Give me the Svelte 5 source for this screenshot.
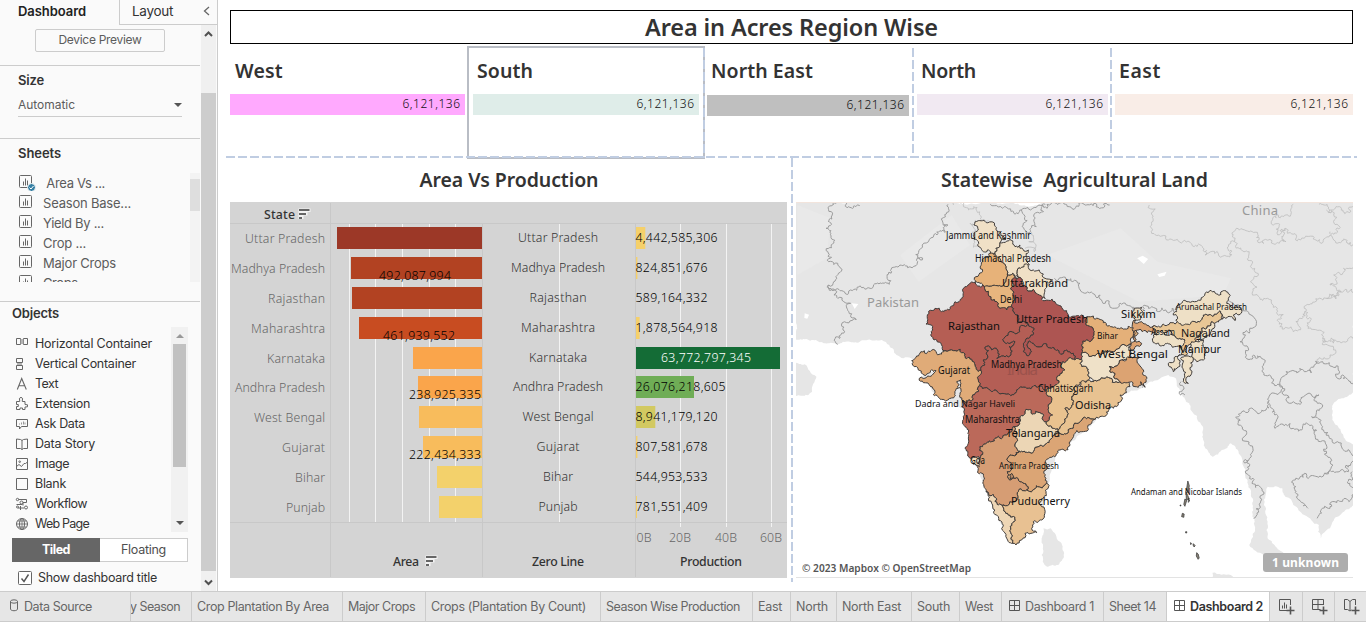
<script>
  // Adjusts tracking so a label fills the given width.
  function fit(node, width) {
    const r = document.createRange();
    r.selectNodeContents(node);
    const w = r.getBoundingClientRect().width;
    const n = node.textContent.length;
    if (n && w) node.style.letterSpacing = (width - w) / n + 'px';
  }

  const regions = [
    { name: 'West', tw: 48, color: '#ffa9fe' },
    { name: 'South', tw: 56, color: '#dfede9' },
    { name: 'North East', tw: 102, color: '#bfbfbf' },
    { name: 'North', tw: 55, color: '#f1e9f2' },
    { name: 'East', tw: 42, color: '#f9ede7' }
  ];

  const sheets = [['\u00a0Area Vs ...', 62], ['Season Base...', 88], ['Yield By ...', 61], ['Crop ...', 43], ['Major Crops', 73], ['Crops ...', 48]];
  const objects = [
    ['hc', 'Horizontal Container', 117], ['vc', 'Vertical Container', 101], ['tx', 'Text', 23],
    ['ex', 'Extension', 55], ['ask', 'Ask Data', 50], ['story', 'Data Story', 60],
    ['img', 'Image', 34], ['blank', 'Blank', 31], ['wf', 'Workflow', 52], ['web', 'Web Page', 54]
  ];

  const rows = [
    ['Uttar Pradesh', 227, 337, '#9c3827', '', 0, '4,442,585,306', 9.3, '#f5d06a', 80],
    ['Madhya Pradesh', 257, 351, '#b24222', '492,087,994', 379, '824,851,676', 1.4, '#f5d06a', 94],
    ['Rajasthan', 287, 352, '#b24222', '', 0, '589,164,332', 0, '#f5d06a', 57],
    ['Maharashtra', 317, 359, '#c84c21', '461,939,552', 383, '1,878,564,918', 3.6, '#f5d06a', 74],
    ['Karnataka', 347, 413, '#faa54b', '', 0, '63,772,797,345', 144, '#146c36', 58],
    ['Andhra Pradesh', 376, 418, '#faa54b', '238,925,335', 409, '26,076,218,605', 58, '#6fad56', 90],
    ['West Bengal', 406, 419, '#f8bc5c', '', 0, '8,941,179,120', 19.3, '#d2c961', 71],
    ['Gujarat', 436, 423, '#f8bc5c', '222,434,333', 409, '807,581,678', 1.4, '#f5d06a', 43],
    ['Bihar', 466, 437, '#f3d16b', '', 0, '544,953,533', 0, '#f5d06a', 30],
    ['Punjab', 496, 439, '#f3d16b', '', 0, '781,551,409', 1, '#f5d06a', 39]
  ];
  const numWidth = (s) => (s.length === 11 ? 72 : s.length === 13 ? 82 : 90);

  // Midpoint displacement keyed on the end points, so neighbours share one edge.
  function noise(a, b) {
    const s = Math.sin(a * 12.9898 + b * 78.233) * 43758.5453;
    return (s - Math.floor(s)) - 0.5;
  }
  function split(p, q, amp, min) {
    const d = Math.hypot(q[0] - p[0], q[1] - p[1]);
    if (d < min) return [q];
    const swap = p[0] > q[0] || (p[0] === q[0] && p[1] > q[1]);
    const [u, v] = swap ? [q, p] : [p, q];
    const k = noise(u[0] + v[1], u[1] + v[0]) * amp * Math.min(1, 30 / d);
    const m = [(u[0] + v[0]) / 2 - (v[1] - u[1]) * k, (u[1] + v[1]) / 2 + (v[0] - u[0]) * k];
    return [...split(p, m, amp, min), ...split(m, q, amp, min)];
  }
  function trace(str, closed = true, amp = 0.7, min = 7) {
    const pts = str.split(' ').map((s) => s.split(',').map(Number));
    const out = [pts[0]];
    for (let i = 1; i < pts.length; i++) out.push(...split(pts[i - 1], pts[i], amp, min));
    if (closed) out.push(...split(pts[pts.length - 1], pts[0], amp, min));
    return 'M' + out.map((p) => p[0].toFixed(1) + ' ' + p[1].toFixed(1)).join('L') + (closed ? 'Z' : '');
  }

  const west = [
    ['#f0e0c6', '222,75 235,62 268,66 290,92 318,118 300,128 288,145 285,160 262,150 250,155 235,125 222,105 235,90'],
    ['#f0e0c6', '285,160 288,145 300,128 320,123 345,140 360,135 385,150 388,195 365,202 352,210 355,232 338,220 322,222 318,200 303,185'],
    ['#e7b279', '280,160 303,185 318,200 322,222 318,245 295,258 262,258 240,250 225,248 228,230 245,218 248,185 262,172'],
    ['#e7b57e', '322,222 338,220 352,235 338,245 335,270 345,300 345,318 335,335 325,320 310,328 300,325 290,305 265,285 255,270 247,256 262,258 295,258 318,245'],
    ['#f0e0c6', '355,232 352,210 365,202 400,210 430,222 458,240 440,262 436,295 425,295 400,268 380,268 365,245'],
    ['#ad5552', '338,245 355,232 365,245 380,268 400,268 425,298 465,305 500,332 545,345 562,350 572,380 582,405 560,420 545,435 545,460 545,478 525,480 520,460 500,450 455,445 440,432 400,430 385,425 395,455 385,468 370,455 375,425 398,405 402,385 385,372 352,370 348,345 335,320 345,300 335,270'],
    ['#b55e54', '225,248 247,256 255,270 265,285 290,305 300,325 320,330 335,320 348,345 352,370 385,372 325,400 312,415 330,430 345,425 328,440 330,468 310,468 290,475 292,450 275,450 265,438 255,442 262,465 250,480 255,495 243,512 225,495 215,478 195,462 160,452 135,452 110,420 95,400 98,380 78,372 82,355 105,325 125,335 150,322 165,305 190,290 200,260 215,246'],
    ['#b45e55', '243,512 255,495 250,480 262,465 255,442 265,438 275,450 292,450 290,475 310,468 330,468 328,440 345,425 330,430 312,415 325,400 385,372 402,385 398,405 375,425 370,455 385,468 395,455 385,425 400,430 440,432 455,445 500,450 520,460 525,480 488,485 495,510 470,535 460,560 440,570 385,565 350,570 325,582 300,582 285,570 235,560 235,540'],
    ['#e0ab78', '35,482 50,468 110,460 135,452 160,452 195,462 215,478 225,495 243,512 235,540 235,560 235,575 218,585 218,600 200,610 190,602 183,570 182,540 170,545 175,565 165,580 125,598 100,584 70,548 58,535 80,532 108,512 85,520 55,510 38,495'],
    ['#bb695a', '235,560 285,570 300,582 325,582 350,570 385,565 440,570 455,602 445,620 458,645 440,665 428,650 420,638 378,628 360,655 345,680 320,705 285,715 240,740 240,775 215,775 205,730 195,680 185,620 190,602 200,610 218,600 218,585 235,575'],
    ['#d69d74', '240,740 285,715 320,705 345,680 348,765 330,765 335,800 322,815 325,835 345,835 360,845 380,870 352,878 350,900 310,915 285,905 258,875 250,840 232,800 225,785 240,775'],
    ['#f0dcbe', '215,775 240,775 238,800 228,795 218,785'],
    ['#eed6b5', '258,875 285,905 310,915 325,945 342,965 338,1030 325,1025 305,985 295,950 275,910'],
    ['#e8c192', '310,915 350,900 352,878 380,870 440,850 438,880 425,920 425,960 400,965 395,985 410,998 375,1000 365,1020 348,1035 338,1030 342,965 325,945'],
    ['#dba575', '348,765 400,755 440,730 480,700 505,695 530,670 545,660 590,652 575,670 545,695 510,725 505,740 480,750 460,768 440,778 438,810 440,850 380,870 360,845 345,835 325,835 322,815 335,800 330,765'],
    ['#ecd6b5', '378,628 420,638 428,650 440,665 460,685 480,700 440,730 400,755 348,765 345,680 360,655'],
    ['#e9c28f', '488,485 525,480 545,478 565,515 568,530 525,560 515,590 515,620 495,625 505,640 495,665 480,700 460,685 440,665 458,645 445,620 455,602 440,570 460,560 470,535 495,510'],
    ['#e8c291', '515,590 525,560 568,540 580,545 620,530 660,545 690,560 660,585 662,605 640,625 600,650 590,652 545,660 530,670 505,695 480,700 495,665 505,640 495,625 515,620'],
    ['#efe1c8', '545,478 545,460 590,462 640,455 675,435 693,432 692,455 665,480 628,500 645,520 660,545 620,530 580,545 568,530 565,515'],
    ['#e4b079', '562,350 580,348 610,368 640,382 700,385 715,400 693,432 675,435 640,455 590,462 545,460 545,435 560,420 582,405 572,380'],
    ['#dca372', '628,500 665,480 692,470 718,472 730,510 735,562 722,545 715,562 705,560 695,545 660,545 645,520'],
    ['#dca372', '693,432 705,410 725,430 708,438 692,450'],
    ['#dca372', '700,385 702,360 725,365 760,378 765,400 742,398 720,388 705,392 698,410'],
    ['#ecdcc0', '702,325 725,322 728,345 720,360 705,362 698,345'],
    ['#e9c796', '760,378 790,372 825,372 885,365 910,345 960,332 967,345 960,360 935,365 905,385 890,410 882,430 865,435 860,465 845,465 838,440 855,420 825,408 765,405'],
    ['#eee0c6', '760,405 825,408 855,420 850,435 810,432 760,428'],
    ['#eee0c6', '820,345 830,335 865,305 910,290 915,280 950,282 970,272 988,290 980,310 1010,320 1025,330 1000,345 1005,362 995,350 967,358 967,345 960,332 910,345 885,365 835,368 832,350'],
    ['#efe0c5', '905,385 935,365 942,385 930,405 910,418 890,430 885,415'],
    ['#efe0c5', '875,425 910,420 920,445 910,480 875,472 868,450'],
    ['#efe0c5', '842,475 858,468 880,480 875,520 865,550 850,545 850,510'],
    ['#efe0c5', '805,490 825,470 842,465 838,490 820,515 808,500'],
    ['#b98a66', '329,824 335,820 342,832 330,836']
  ].map(([c, s]) => [c, trace(s)]);

  const land = [
    '10,15 1540,15 1540,585 1480,625 1475,660 1500,710 1545,770 1540,925 1490,965 1470,1000 1445,1030 1440,990 1400,960 1370,930 1340,880 1300,875 1290,930 1300,1030 1340,1070 1370,1100 1380,1130 1320,1120 1290,1080 1250,1050 1265,980 1260,920 1240,850 1225,780 1200,745 1150,785 1130,760 1120,690 1090,640 1065,590 1050,550 1030,540 980,560 960,578 900,600 830,680 720,780 700,870 690,970 610,1045 570,980 510,810 470,640 410,610 350,550 390,530 330,490 290,480 270,450 250,435 130,448 10,432',
    '690,1000 710,1000 735,1040 745,1080 730,1110 700,1115 685,1080 685,1030',
    '10,505 40,508 72,545 60,590 10,605',
    '1150,1133 1200,1140 1210,1150 1150,1150'
  ].map((s) => trace(s, true, 0.35));

  const borders = [
    '118,28 115,60 98,100 105,200 135,215 105,270 165,285 270,268 275,235 320,218 360,195 360,150 400,120 430,90 430,28',
    '118,30 190,32', '105,270 130,310 165,325 160,350 180,375 140,390 130,448',
    '545,28 590,38 630,45 700,40 760,35 870,30', '630,45 635,85 655,110 690,50', '690,50 695,28',
    '720,250 740,248 790,285 850,320 935,345', '960,345 985,335 1040,340 1050,355',
    '1190,310 1255,360 1258,400 1225,440 1240,475 1270,490 1290,540 1340,575',
    '1340,575 1350,530 1400,530 1450,500 1490,550 1540,568',
    '1340,575 1300,625 1230,650 1220,690 1260,760 1235,800 1285,900 1262,970',
    '1340,575 1370,620 1440,600 1450,630 1420,665 1490,740 1530,800 1520,830 1455,835',
    '1300,620 1320,660 1320,700 1370,700 1420,690 1460,750 1470,800 1455,835 1400,835 1370,870 1390,920 1410,940',
    '1530,830 1530,900 1470,940 1435,970', '1065,560 1060,590 1075,600', '960,578 962,540'
  ].map((s) => trace(s, false, 0.9));
  const faint = [
    '445,30 500,35 540,75', '505,75 490,85 495,130 525,165', '655,110 650,140 670,150 665,170 640,160',
    '978,30 985,90 1030,135 1100,155 1130,180 1200,165 1210,140 1250,170 1265,220 1265,300',
    '1210,140 1215,100 1250,110 1290,145 1350,140 1350,100 1310,80 1350,60 1370,28',
    '1350,100 1390,135 1470,120 1540,155', '1440,28 1480,60 1470,110', '1460,45 1540,35',
    '1265,300 1300,310 1330,380 1370,410 1400,340 1460,310 1540,290', '1540,215 1480,240 1470,270 1500,290 1460,310',
    '1400,350 1410,400 1450,430 1540,430', '1450,430 1470,480 1440,500'
  ].map((s) => trace(s, false, 1));

  const labels = [
    ['Jammu and Kashmir', 946, 239, 85, 10], ['Himachal Pradesh', 975, 262, 76, 10], ['Uttarakhand', 1002, 287, 66, 11.5],
    ['Delhi', 1000, 303, 22, 10], ['Uttar Pradesh', 1016, 323, 72, 11.5], ['Rajasthan', 948, 330, 52, 11.5],
    ['Madhya Pradesh', 991, 368, 71, 10], ['Gujarat', 938, 374, 32, 10], ['Dadra and Nagar Haveli', 915, 407, 100, 9.5],
    ['Maharashtra', 965, 423, 55, 10], ['Goa', 970, 464, 15, 10], ['Telangana', 1006, 437, 54, 11.5],
    ['Chhattisgarh', 1038, 392, 55, 10], ['Odisha', 1075, 409, 36, 11.5], ['Andhra Pradesh', 999, 469, 60, 9],
    ['Puducherry', 1011, 505, 59, 11.5], ['Bihar', 1097, 339, 21, 9], ['West Bengal', 1097, 358, 71, 11.5],
    ['Sikkim', 1121, 318, 35, 11.5], ['Assam', 1151, 335, 24, 8], ['Nagaland', 1181, 337, 49, 11.5],
    ['Manipur', 1178, 353, 43, 11.5], ['Arunachal Pradesh', 1176, 310, 71, 8.5], ['Andaman and Nicobar Islands', 1131, 495, 111, 8.5]
  ];

  const tabs = [
    ['Crop Plantation By Area', 151, 132], ['Major Crops', 83, 67], ['Crops (Plantation By Count)', 175, 155],
    ['Season Wise Production', 152, 134], ['East', 38, 24], ['North', 46, 32], ['North East', 75, 59],
    ['South', 48, 33], ['West', 42, 28], ['Dashboard 1', 102, 69], ['Sheet 14', 63, 47], ['Dashboard 2', 103, 73]
  ];
</script>

{#snippet icon(k)}
  <svg class="ic" width="14" height="14" viewBox="0 0 14 14" fill="none" stroke="#666" stroke-width="1">
    {#if k === 'hc'}
      <path d="M1.5 1.5h4v6h-4zM8.5 1.5h4v6h-4z" /><path d="M5.5 2h3v5h-3z" fill="#b5b5b5" stroke="none" />
    {:else if k === 'vc'}
      <path d="M1.5 1.5h6v4h-6zM1.5 8.5h6v4h-6z" /><path d="M2 6h5v2H2z" fill="#b5b5b5" stroke="none" />
    {:else if k === 'tx'}
      <path d="M2.3 12.5L6.7 1.5 11.3 12.5M4 8.8h5.6" stroke-width="1.1" />
    {:else if k === 'ex'}
      <path d="M1.5 12.5v-3h1.8v-2H1.5v-3h3.2V3a1.6 1.6 0 1 1 2.6 0v1.5H10v3l2.5.3v2L10 10v2.5H7.5v-1.5H5v1.5z" />
    {:else if k === 'ask'}
      <path d="M1.5 2.5h11v7h-6L4.5 12V9.5h-3z" /><path d="M4.5 7.5v-1M6.5 7.5v-2M8.5 7.5v-3M10 7.5v-2" stroke="#999" />
    {:else if k === 'story'}
      <path d="M1.5 2l4 .5L7 3.5l1.5-1 4-.5v9.5h-4l-1.500 1-1.500-1h-4zM7 3.500v9" />
    {:else if k === 'img'}
      <path d="M1.500 1.500h11v11h-11zM1.500 9.500l2.500-2 2.500 2L9 6.500l1.500 0 2-1.500" /><circle cx="4.700" cy="4.700" r=".8" />
    {:else if k === 'blank'}
      <path d="M1.500 1.500h11v11h-11z" />
    {:else if k === 'wf'}
      <path d="M3.500 2.500h8v3H8M1.500 7.500h6M8 5.500v3M3 11h6M5.500 9v4" /><circle cx="2.500" cy="2.500" r="1.200" /><circle cx="6.500" cy="5.500" r="1.500" /><circle cx="11" cy="10.500" r="1.500" /><circle cx="2.500" cy="10" r="1" />
    {:else if k === 'web'}
      <circle cx="7" cy="7" r="5.500" /><ellipse cx="7" cy="7" rx="2.500" ry="5.500" /><path d="M7 1.500v11M1.500 7h11M2.500 4h9M2.500 10h9" stroke-width=".8" />
    {/if}
  </svg>
{/snippet}

{#snippet sort(x, y)}
  <g transform="translate({x} {y})">
    <path d="M-.5-.5h12v3.500h-3v3.500h-4v3.500h-5z" fill="#f3f3f3" />
    <path d="M0 0h10.500v2H0zM0 4h7v2H0zM0 8h3v2H0z" fill="#666" />
  </g>
{/snippet}

<div class="app">
  <div class="top">
    <aside>
      <div class="tabsrow">
        <div class="tab on"><span use:fit={68}>Dashboard</span></div>
        <div class="tab off"><span use:fit={41}>Layout</span>
          <svg width="8" height="10" viewBox="0 0 8 10"><path d="M6 1L1.500 5 6 9" fill="none" stroke="#666" stroke-width="1.300" /></svg>
        </div>
      </div>
      <div class="body">
        <div class="content">
          <section class="preview"><div class="btn"><span use:fit={83}>Device Preview</span></div></section>
          <section class="size">
            <h4><span use:fit={26}>Size</span></h4>
            <div class="select"><span use:fit={57}>Automatic</span><i class="down"></i></div>
          </section>
          <section class="sheets">
            <h4><span use:fit={43}>Sheets</span></h4>
            <div class="list">
              <div class="items">
                {#each sheets as [s, w], i}
                  <div class="sheet">
                    <svg width="17" height="17" viewBox="0 0 17 17" fill="none" stroke="#666">
                      <rect x=".5" y="1.500" width="12" height="12" rx="1" /><path d="M4.500 11.500v-4M6.500 11.500v-7M8.500 11.500v-5" />
                      {#if i === 0}<circle cx="12.500" cy="13.500" r="4" fill="#3680a4" stroke="#fafafa" /><path d="M10.500 13.500l1.500 1.500 2.500-3" stroke="#fff" />{/if}
                    </svg>
                    <span use:fit={w}>{s}</span>
                  </div>
                {/each}
              </div>
              <div class="sbar"><div></div></div>
            </div>
          </section>
          <section class="objects">
            <h4><span use:fit={47}>Objects</span></h4>
            <div class="olist">
              <div class="oitems">
                {#each objects as [k, s, w]}
                  <div class="obj">{@render icon(k)}<span use:fit={w}>{s}</span></div>
                {/each}
              </div>
              <div class="obar"><i class="up"></i><div class="thumb"></div><i class="down"></i></div>
            </div>
            <div class="toggle"><b><span use:fit={28}>Tiled</span></b><div><span use:fit={45}>Floating</span></div></div>
            <div class="check">
              <svg width="14" height="14" viewBox="0 0 14 14"><rect x=".5" y=".5" width="13" height="13" rx="1" fill="#fff" stroke="#666" /><path d="M3.500 7.500l2.500 3 4.500-7" fill="none" stroke="#555" stroke-width="1.400" /></svg>
              <span use:fit={119}>Show dashboard title</span>
            </div>
          </section>
        </div>
        <div class="vbar">
          <svg width="15" height="18" viewBox="0 0 15 18"><path d="M4 11l3.500-3.500L11 11" fill="none" stroke="#505050" stroke-width="2" /></svg>
          <div class="vthumb"></div>
          <svg width="15" height="20" viewBox="0 0 15 20"><path d="M4 9.500L7.500 13 11 9.500" fill="none" stroke="#505050" stroke-width="2" /></svg>
        </div>
      </div>
    </aside>

    <main>
      <div class="title"><span use:fit={293}>Area in Acres Region Wise</span></div>
      <div class="regions">
        {#each regions as r, i}
          <div class="region r{i}">
            <h2><span use:fit={r.tw}>{r.name}</span></h2>
            <div class="bar" style="background:{r.color}"><span use:fit={58}>6,121,136</span></div>
          </div>
        {/each}
      </div>
      <div class="panels">
        <div class="panel left">
          <h3><span use:fit={179}>Area Vs Production</span></h3>
          <svg class="chart" width="557" height="376" viewBox="230 202 557 376">
            <rect x="230" y="202" width="557" height="376" fill="#d4d4d4" />
            {#each [349.5, 375.5, 402.5, 429.5, 455.5, 559.5] as x}<path d="M{x} 224V522" stroke="#f3f3f3" />{/each}
            {#each [680.5, 726.5, 771.5] as x}<path d="M{x} 224V527" stroke="#f3f3f3" />{/each}
            <path d="M230 223.500H787M230 522.500H787M330.500 203V577M482.500 224V577M635.500 224V577" stroke="#c8c8c8" />
            {#each rows as [n, y, x, c, a, ax, p, pw, pc, w], i}
              <rect {x} {y} width={482 - x} height="22" fill={c} />
              <rect x="636" {y} width={pw} height="22" fill={pc} />
              <text x={325 - w} y={y + 16} textLength={w} fill="#666">{n}</text>
              <text x={558 - w / 2} y={y + 15} textLength={w} fill="#333">{n}</text>
              {#if a}<text x={ax} y={y + 23} textLength="72" fill="#000">{a}</text>{/if}
              <text x={i === 4 ? 661 : 635.5} y={y + 15} textLength={numWidth(p)} fill={i === 4 ? '#fff' : '#000'}>{p}</text>
            {/each}
            <g fill="#666">
              <text x="636.500" y="542" textLength="15">0B</text><text x="669" y="542" textLength="22">20B</text>
              <text x="715" y="542" textLength="22">40B</text><text x="760" y="542" textLength="22">60B</text>
            </g>
            <g fill="#333" class="med">
              <text x="264" y="219" textLength="31">State</text><text x="393" y="566" textLength="26">Area</text>
              <text x="532" y="566" textLength="52">Zero Line</text><text x="680" y="566" textLength="62">Production</text>
            </g>
            {@render sort(299, 209)}
            {@render sort(426, 556)}
          </svg>
        </div>
        <div class="panel right">
          <h3><span use:fit={267}>Statewise&nbsp; Agricultural Land</span></h3>
          <svg class="map" width="557" height="376" viewBox="796 202 557 376">
            <g transform="translate(790 195) scale(.36735 .33333)" fill="none" stroke-linejoin="round">
              {#each land as d}<path {d} fill="#e6e6e6" />{/each}
              <path d="M20 30L110 70 100 190 20 240zM440 60L490 150 350 260 300 180zM700 180L900 100 1000 200 1200 250 1180 300 950 320z" fill="#e9e9e9" />
              <path d="M945 190l15-8 15 10-12 15zM1000 238l25-8-5 12-15 4zM168 325l18 2-10 15zM40 355l12 4-5 12-8-2z" fill="#fff" />
              {#each faint as d}<path {d} stroke="#bcbcbc" vector-effect="non-scaling-stroke" stroke-width=".8" />{/each}
              {#each borders as d}<path {d} stroke="#9c9c9c" vector-effect="non-scaling-stroke" />{/each}
            </g>
            <g transform="translate(900 200) scale(.33333)" stroke="#403c3a" stroke-linejoin="round">
              {#each west as [c, d]}<path {d} fill={c} vector-effect="non-scaling-stroke" />{/each}
            </g>
            <g transform="translate(790 195) scale(.36735 .33333)" fill="#8a8478" stroke="#333" stroke-width="2">
              <path d="M1083 858l4 14-3 22-5-8zM1078 890l5 12 4 10-8 2zM1075 912l5 4-5 18-3-6zM1085 910l3 8-4 4zM1068 955l5 2-1 10-6-2zM1077 1010h3v4h-3zM1090 1043l3 2-2 4zM1098 1046l5 6-3 4-3-6zM1107 1073l4 4 3 12-3 4-5-10zM1062 930h2v3h-2z" />
            </g>
            <path d="M796 202.500H1353" stroke="#f2e4dc" /><path d="M796 577.500H1353" stroke="#e3e3e3" />
            <text x="1007" y="375" textLength="31" font-size="15" fill="#8c4b47" opacity=".6">India</text>
            <text x="867" y="307" textLength="52" font-size="13" fill="#999">Pakistan</text>
            <text x="1242" y="215" textLength="36" font-size="13" fill="#999">China</text>
            {#each labels as [t, x, y, w, s]}<text {x} {y} textLength={w} font-size={s} fill="#111" lengthAdjust="spacingAndGlyphs">{t}</text>{/each}
            <text x="802" y="572" textLength="169" font-size="10.500" fill="#555" class="semi" lengthAdjust="spacingAndGlyphs">© 2023 Mapbox © OpenStreetMap</text>
            <rect x="1263" y="553" width="85" height="19" rx="3" fill="#adadad" />
            <text x="1272" y="567" textLength="67" font-size="12" fill="#fff" class="bold">1 unknown</text>
          </svg>
        </div>
      </div>
    </main>
  </div>

  <footer>
    <div class="ft src"><svg width="10" height="13" viewBox="0 0 10 13" fill="none" stroke="#666"><ellipse cx="5" cy="2.500" rx="3.500" ry="1.700" /><path d="M1.500 2.500v7.500c0 2.300 7 2.300 7 0V2.500" /></svg><span use:fit={68}>Data Source</span></div>
    <div class="ft cut"><span use:fit={50}>y Season</span></div>
    {#each tabs as [t, w, tw], i}
      <div class="ft" class:active={i === 11} style="width:{w}px">
        {#if t.startsWith('Dashboard')}
          <svg class="grid" width="12" height="12" viewBox="0 0 12 12" fill="none" stroke="#555"><path d="M1.500 .5h10v10h-10zM6.500 .5v10M1.500 5.500h10" /></svg>
        {/if}
        <span use:fit={tw}>{t}</span>
      </div>
    {/each}
    {#each [0, 1, 2] as k}
      <div class="ft add">
        <svg width="18" height="18" viewBox="0 0 18 18" fill="none" stroke="#555">
          {#if k === 0}<path d="M12.500 7V1.500h-11v11h8M4.500 10.500v-3M6.500 10.500v-6M8.500 10.500v-4" />
          {:else if k === 1}<path d="M12.500 7V1.500h-11v10h8M7 1.500v10M1.500 6.500h11" />
          {:else}<path d="M12.500 7V1.500h-3L7 3.500 4.500 1.500h-3v10h3L7 13l1.500-1M7 3.500v9" />{/if}
          <path d="M12.500 8.500v8M8.500 12.500h8" stroke-width="1.600" />
        </svg>
      </div>
    {/each}
  </footer>
</div>

<style>
  :global(body) { overflow: hidden; background: #fff; }
  * { box-sizing: border-box; }
  .app { width: 1366px; height: 622px; display: flex; flex-direction: column; font: 13px/20px Inter, 'Liberation Sans', sans-serif; color: #4f4f4f; }
  span { white-space: nowrap; }
  .top { height: 591px; display: flex; }
  aside { width: 218px; background: #fafafa; border-right: 1px solid #ccc; display: flex; flex-direction: column; flex: none; }
  .tabsrow { display: flex; height: 25px; }
  .tab { line-height: 23px; }
  .on { width: 119px; padding-left: 18px; font-weight: 600; color: #222; }
  .off { width: 98px; padding: 0 6px 0 12px; border: solid #ccc; border-width: 0 0 1px 1px; font-size: 13.5px; display: flex; justify-content: space-between; color: #333; }
  .off svg { margin-top: 6px; }
  .body { display: flex; height: 566px; }
  .content { width: 200px; }
  section { border-bottom: 1px solid #ccc; }
  h4 { margin: 0; font-size: 13px; line-height: 20px; font-weight: 600; color: #333; }
  .preview { height: 41px; padding: 4px 35px; }
  .btn { width: 130px; height: 23px; border: 1px solid #ccc; border-radius: 2px; text-align: center; font-size: 12px; line-height: 20px; color: #5c5c5c; }
  .size { height: 73px; padding: 4px 18px; }
  .select { height: 24px; margin-top: 3px; border-bottom: 1px solid #ccc; display: flex; justify-content: space-between; align-items: center; line-height: 22px; padding-top: 1px; font-size: 12px; color: #5c5c5c; }
  i { width: 0; height: 0; border: 4px solid transparent; display: block; }
  .down { border-top-color: #555; border-bottom: 0; }
  .up { border-bottom-color: #999; border-top: 0; }
  .sheets { height: 163px; padding: 4px 0 0 18px; }
  .list { height: 110px; margin-top: 9px; display: flex; justify-content: space-between; }
  .items { height: 110px; padding-top: 1px; overflow: hidden; }
  .sheet { display: flex; height: 20px; gap: 7px; color: #5c5c5c; }
  .sheet svg { margin: 1px 0 0 1px; }
  .sbar { width: 10px; height: 109px; margin-top: 1px; background: #f3f3f3; }
  .sbar div { height: 32px; margin-top: 6px; background: #dedede; }
  .objects { border: 0; padding: 1px 12px; }
  .olist { height: 205px; margin-top: 4px; display: flex; justify-content: space-between; }
  .oitems { padding: 7px 0 0 3px; }
  .obj { height: 20px; display: flex; gap: 6px; color: #333; font-size: 12.500px; }
  .ic { margin-top: 3px; }
  .obar { width: 17px; background: #f1f1f1; display: flex; flex-direction: column; align-items: center; padding: 7px 0; }
  .thumb { width: 13px; height: 123px; margin: 6px 0 54px; background: #c1c1c1; flex: none; }
  .toggle { height: 24px; margin-top: 6px; display: flex; border: 1px solid #ccc; text-align: center; line-height: 22px; font-size: 12.500px; }
  .toggle b { width: 88px; margin: -1px 0 -1px -1px; padding-top: 1px; background: #666; color: #fff; }
  .toggle div { flex: 1; background: #fff; }
  .check { display: flex; height: 32px; align-items: center; gap: 6px; padding-left: 6px; color: #333; font-size: 12.500px; }
  .vbar { width: 15px; margin-left: 1px; background: #f0f0f0; }
  .vbar svg { display: block; }
  .vthumb { height: 478px; margin-top: 50px; background: #cdcdcd; }

  main { flex: 1; padding: 10px 9px 0 8px; font-family: 'Noto Sans', sans-serif; color: #333; }
  .title { height: 34px; margin: 0 4px; border: 1px solid #000; text-align: center; font-size: 23.500px; font-weight: 600; line-height: 32px; }
  .regions { height: 114px; padding-top: 4px; display: grid; grid-template-columns: 242px 236px 209px 198px 246px; position: relative; }
  .regions::after { content: ''; position: absolute; inset: auto 0 0 0; height: 2px; background: repeating-linear-gradient(90deg, #c0cde2 0 9px, transparent 9px 12px); }
  .region { position: relative; padding: 10px 3px 0 4px; }
  .r2 { padding-left: 3px; padding-right: 4px; }
  .r1 { padding-left: 5px; padding-right: 5px; }
  .r1::before { content: ''; position: absolute; inset: -2px -1px -1px -1px; border: 2px solid #b9bdc5; }
  .region:not(.r4)::after { content: ''; position: absolute; right: -1px; top: 0; bottom: 0; width: 2px; background: repeating-linear-gradient(180deg, #c0cde2 0 9px, transparent 9px 12px); }
  .r0 h2 { margin-left: 5px; }
  h2 { margin: 0 0 0 4px; font-size: 19.500px; line-height: 26px; height: 25px; font-weight: 600; }
  .bar { height: 21px; margin-top: 11px; text-align: right; padding-right: 4.500px; font-size: 12px; line-height: 20px; }
  .r2 .bar { margin-top: 12px; }
  .r4 { padding-right: 4px; }
  .panels { display: flex; height: 424px; }
  .panel { padding: 0 4px; }
  .left { width: 566px; position: relative; }
  .left::after { content: ''; position: absolute; right: -1px; top: 0; bottom: 0; width: 2px; background: repeating-linear-gradient(180deg, #c0cde2 0 9px, transparent 9px 12px); }
  h3 { margin: 0; height: 44px; font-size: 19.500px; line-height: 43px; font-weight: 600; text-align: center; }
  svg.chart, svg.map { display: block; font-family: 'Noto Sans', sans-serif; }
  .chart, .bar { font-weight: 300; color: #111; }
  .chart { font-size: 12.300px; }
  .med { font-weight: 500; }
  .semi { font-weight: 600; }
  .bold { font-weight: 700; }

  footer { height: 31px; display: flex; background: #e6e6e6; border: solid #ccc; border-width: 1px 0; font-size: 12.500px; line-height: 29px; color: #666; }
  .ft { flex: none; border-right: 1px solid #ccc; padding-left: 5px; display: flex; overflow: hidden; }
  .src { width: 131px; padding-left: 9px; gap: 5px; }
  .src svg { margin-top: 7px; }
  .cut { width: 61px; padding: 0; }
  .cut span { margin-left: -1px; }
  .grid { margin: 8px 5px 0 1px; }
  .active { background: #fff; color: #333; font-weight: 600; }
  .add { width: 32.500px; padding: 6px 0 0 8px; }
</style>
